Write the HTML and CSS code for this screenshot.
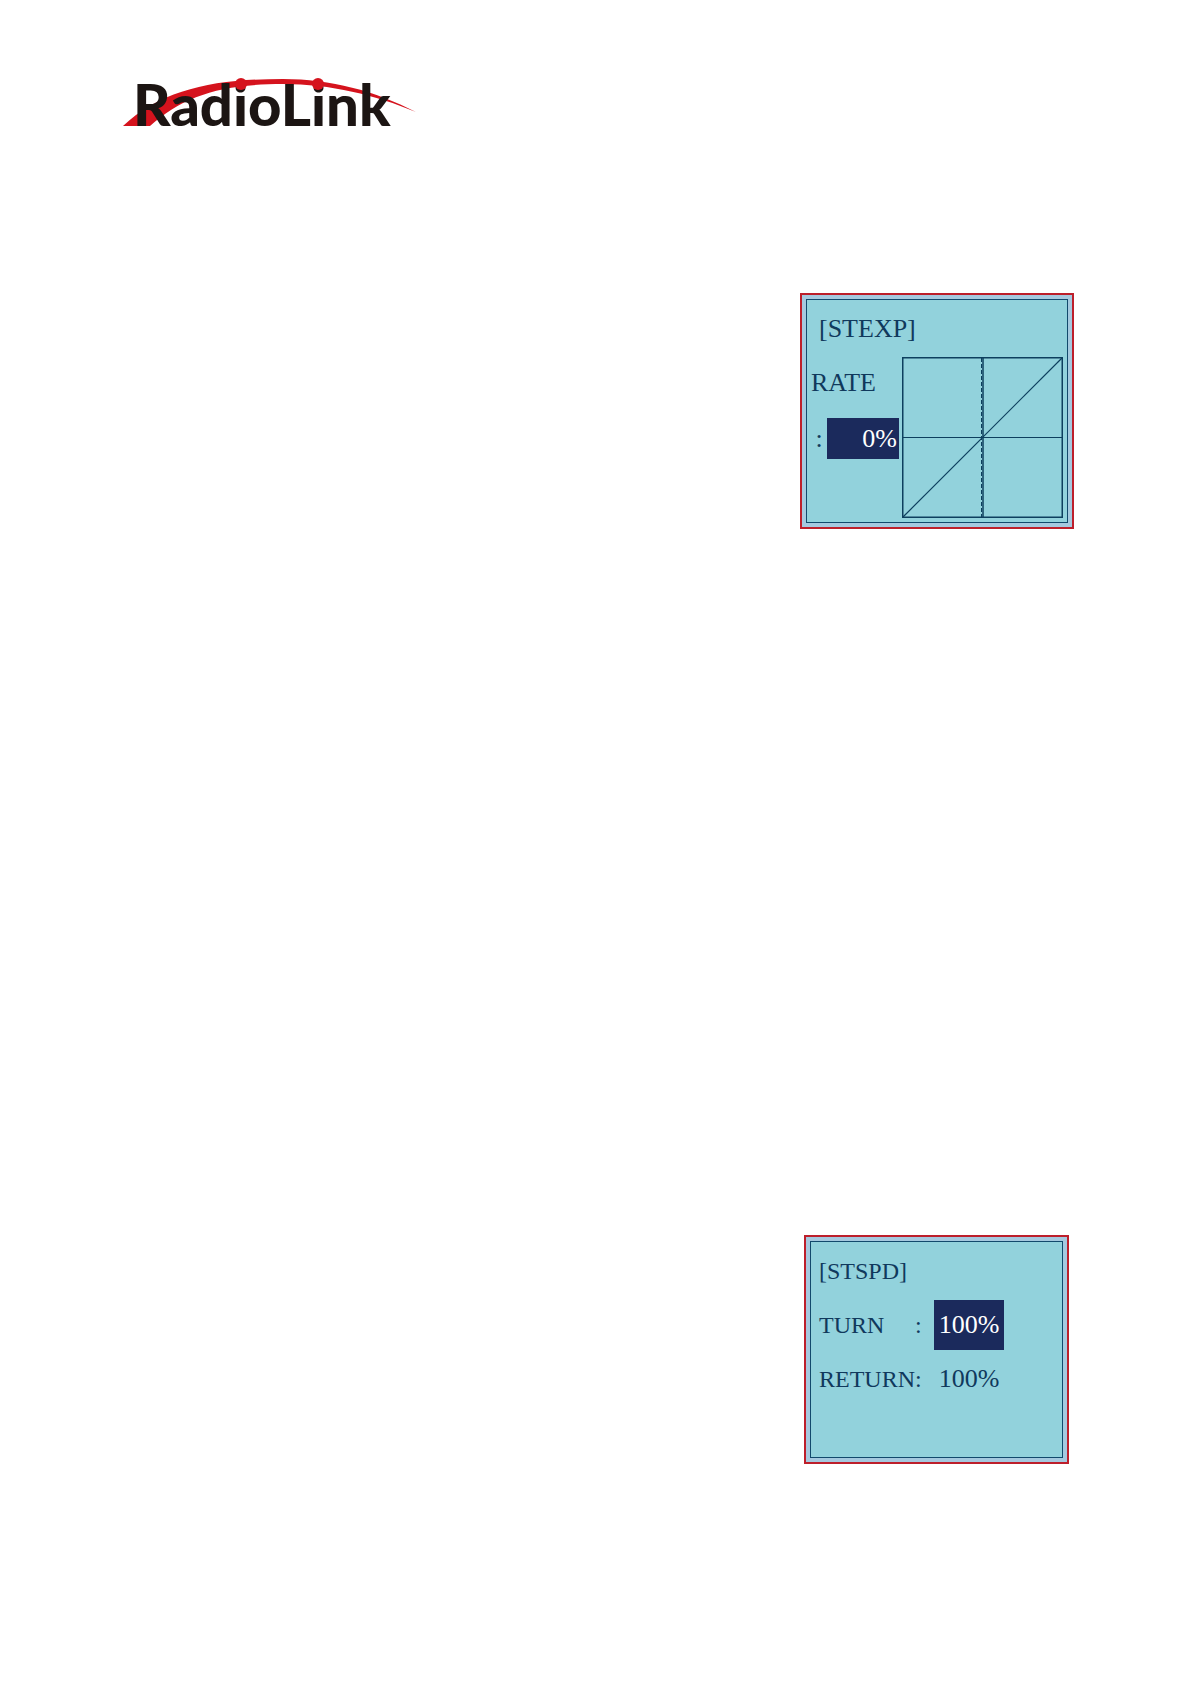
FILE: index.html
```html
<!DOCTYPE html>
<html lang="en">
<head>
  <meta charset="UTF-8">
  <meta name="viewport" content="width=device-width, initial-scale=1.0">
  <title>RadioLink</title>
  <link rel="stylesheet" href="styles.css">
</head>
<body>
  <header class="header">
    <svg class="logo" viewBox="0 0 294 52" role="img" aria-label="RadioLink">
      <path class="logo-arc" d="M0 48 C40 11 92 1 160 1 C208 1 252 13 293 34 C252 17 208 6 160 6 C98 6 60 18 27 48 Z"/>
      <text class="logo-text" x="10" y="48">RadioLink</text>
      <circle class="logo-dot" cx="118" cy="6" r="6"/>
      <circle class="logo-dot" cx="195" cy="6" r="6"/>
    </svg>
  </header>
  <main class="content">
    <section class="lcd lcd-exp">
      <div class="screen">
        <h2 class="title">[STEXP]</h2>
        <div class="exp-body">
          <div class="rate">
            <div class="rate-name">RATE</div>
            <div class="rate-row">
              <span class="colon">:</span>
              <span class="value selected">0%</span>
            </div>
          </div>
          <svg class="curve" viewBox="0 0 161 161">
            <rect x="0.75" y="0.75" width="159.5" height="159.5"/>
            <path d="M1 80.5H160" stroke-width="1"/>
            <path d="M81 1V160"/>
            <path d="M1 160L160 1" stroke-width="1.2"/>
            <path d="M79.5 1V160" stroke-width="1" stroke-dasharray="4 2"/>
          </svg>
        </div>
      </div>
    </section>
    <section class="lcd lcd-spd">
      <div class="screen">
        <h2 class="title">[STSPD]</h2>
        <div class="row">
          <span class="name">TURN</span>
          <span class="colon">:</span>
          <span class="value selected">100%</span>
        </div>
        <div class="row">
          <span class="name">RETURN</span>
          <span class="colon">:</span>
          <span class="value">100%</span>
        </div>
      </div>
    </section>
  </main>
</body>
</html>
```
FILE: styles.css
```css
* {
  box-sizing: border-box;
}
body {
  margin: 0;
  background: #fff;
  font-family: "Liberation Serif", "Times New Roman", serif;
  color: #10395c;
}
.header {
  padding: 78px 123px 0;
}
.logo {
  display: block;
  width: 294px;
  height: 52px;
  overflow: visible;
}
.logo-text {
  font: 900 58px Lato, sans-serif;
  fill: #1c1513;
}
.logo-arc, .logo-dot {
  fill: #d5131d;
}
.content {
  display: flex;
  flex-direction: column;
  align-items: flex-end;
  gap: 706px;
  padding: 163px 116px 218px;
}
/* lcd screens */
.lcd {
  padding: 4px;
  border: 2px solid #bd1f2b;
  background: #a5c9df;
}
.screen {
  height: 100%;
  border: 1px solid #12496c;
  background: #92d2dc;
}
.title {
  margin: 0;
  font-weight: normal;
}
.selected {
  background: #1b2a5c;
  color: #fff;
}
.lcd-exp {
  width: 274px;
  font-size: 26px;
}
.lcd-exp .screen {
  padding: 0 4px 4px 4px;
}
.lcd-exp .title {
  padding-left: 8px;
  font-size: 26px;
  line-height: 57px;
}
.exp-body {
  display: flex;
  gap: 3px;
}
.rate {
  flex: 1;
}
.rate-name {
  line-height: 52px;
}
.rate-row {
  display: flex;
  margin-top: 9px;
  line-height: 41px;
}
.rate-row .colon {
  width: 16px;
  text-align: center;
}
.rate-row .value {
  flex: 1;
  padding-right: 2px;
  text-align: right;
}
.curve {
  width: 161px;
  height: 161px;
  fill: none;
  stroke: #0d3f5e;
  stroke-width: 1.5;
}
.lcd-spd {
  width: 265px;
  height: 229px;
  margin-right: 5px;
  font-size: 24px;
}
.lcd-spd .screen {
  padding-left: 8px;
}
.lcd-spd .title {
  font-size: 24px;
  line-height: 58px;
}
.row {
  display: grid;
  grid-template-columns: 94px 21px 70px;
  margin-bottom: 4px;
  line-height: 50px;
}
.row .colon {
  padding-left: 2px;
}
.row .value {
  font-size: 26px;
  text-align: center;
}
```
